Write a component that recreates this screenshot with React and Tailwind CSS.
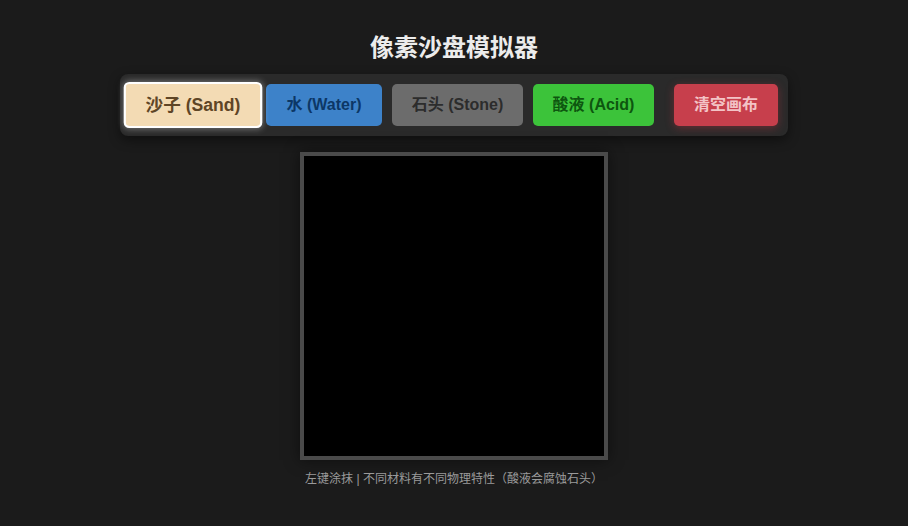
import React, { useState } from "react";

const materials = [
  { id: "sand", label: "沙子 (Sand)", cls: "w-[126px] bg-[#f3dbb4] text-[#5e4526]" },
  { id: "water", label: "水 (Water)", cls: "w-[116px] bg-[#3d82c9] text-[#0c3766]" },
  { id: "stone", label: "石头 (Stone)", cls: "w-[131px] bg-[#6c6c6c] text-[#2c2c2c]" },
  { id: "acid", label: "酸液 (Acid)", cls: "w-[121px] bg-[#3cc33a] text-[#0d560f]" },
];

const font = { fontFamily: '"Liberation Sans", "Noto Sans CJK SC", sans-serif' };

export default function App() {
  const [current, setCurrent] = useState("sand");

  return (
    <div
      className="min-h-screen bg-[#1b1b1b] flex flex-col items-center pt-[32px]"
      style={font}
    >
      <h1 className="text-2xl font-bold text-[#ececec] leading-8">像素沙盘模拟器</h1>

      {/* toolbar */}
      <div className="mt-[10px] flex items-center gap-[10px] p-[10px] bg-[#2a2a2a] rounded-lg shadow-[0_4px_12px_rgba(0,0,0,0.45)]">
        {materials.map((m) => {
          const active = current === m.id;
          return (
            <button
              key={m.id}
              onClick={() => setCurrent(m.id)}
              className={`h-[42px] rounded-[5px] text-base font-bold border-2 ${m.cls} ${
                active
                  ? "border-white scale-110 shadow-[0_0_6px_rgba(255,255,255,0.35)]"
                  : "border-transparent"
              }`}
            >
              {m.label}
            </button>
          );
        })}
        <button className="ml-[10px] w-[104px] h-[42px] rounded-[5px] text-base font-bold border-2 border-transparent bg-[#c73f4c] text-[#f3c3c6] shadow-[0_2px_8px_rgba(220,53,69,0.35)]">
          清空画布
        </button>
      </div>

      {/* canvas */}
      <div className="mt-4 w-[308px] h-[308px] border-4 border-[#4a4a4a] bg-black shadow-[0_0_14px_rgba(0,0,0,0.5)]" />

      <p className="mt-[10px] text-[12px] leading-[18px] text-[#9a9a9a]">
        左键涂抹 | 不同材料有不同物理特性（酸液会腐蚀石头）
      </p>
    </div>
  );
}
